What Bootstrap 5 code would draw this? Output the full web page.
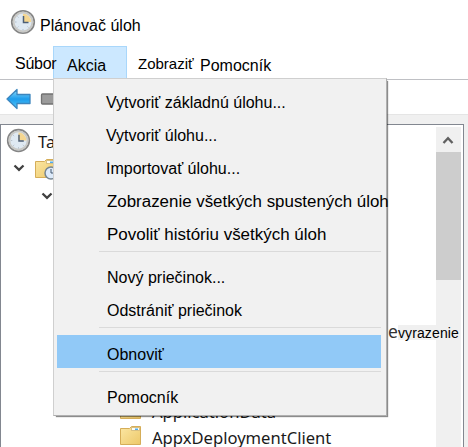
<!DOCTYPE html>
<html lang="sk">
<head>
<meta charset="utf-8">
<meta name="viewport" content="width=device-width, initial-scale=1">
<title>Plánovač úloh</title>
<link rel="stylesheet" href="https://cdn.jsdelivr.net/npm/bootstrap@5.3.0/dist/css/bootstrap.min.css">
<style>
html,body{height:100%;overflow:hidden}
body{font-family:"Liberation Sans",Arial,sans-serif;font-size:16px;color:#000;line-height:20px}
svg{display:block;flex:none}
.app-window{width:468px;height:447px;background:#fff}
.title-row{height:46px;padding:9px 0 0 10px}
.title-row span{padding-top:7px;margin-left:4px;letter-spacing:.02px}
.menu-row{height:33px;padding-left:15px}
.menu-row span{display:block}
.m-file{width:38px;padding-top:8px;letter-spacing:-.25px;z-index:1}
.m-action{width:74px;height:33px;background:#cce8ff;border:1px solid #a9d7fb;padding:9px 0 0 13px}
.m-view{width:73px;padding:8px 0 0 11px;font-size:15px}
.m-help{padding-top:10px}
.tool-row{height:36px;border-top:1px solid #bfc0c4;border-bottom:1px solid #e5e5e5;padding:8px 0 0 6px}
.work{height:332px;background:#f0f0f0;padding:9px 4px 0 0}
.tree{height:324px;background:#fff;border:1px solid #828790;border-width:1px 1px 0;padding-right:2px}
.tree-ui{font-family:"Noto Sans","Open Sans",sans-serif;font-size:16.6px;color:#1a1a1a;white-space:nowrap}
.tree-root{height:29px;padding-top:3px}
.tree-root span{margin-left:6px;padding-top:4px}
.tree-sub{padding:10px 0 0 24px}
.tree-leaves{padding:200px 0 0 119px}
.leaf{height:26px}
.leaf span{margin-left:10px;margin-top:2px}
.scroll-track{width:25px;margin-top:2px;background:#f0f0f0}
.scroll-track svg{height:25px}
.scroll-thumb{height:128px;background:#cdcdcd}
.action-menu{left:53px;top:78px;width:334px;height:338px;background:#f1f1f1;border:1px solid #b0b0b0;border-left-color:#cfcfcf;border-top-color:#cfcfcf;padding:7px 5px 0 3px;box-shadow:2px 2px 1px -1px rgba(0,0,0,.45)}
.menu-item{height:33px;padding:7px 0 0 50px;white-space:nowrap}
.menu-item.short{padding-left:49px}
.stretch{display:inline-block;transform:scaleX(1.056);transform-origin:0 50%}
.stretch.less{transform:scaleX(1.06)}
.menu-item.group-start{margin-top:9px}
.menu-item.chosen{background:#91c9f7;margin:7px 0 3px;padding-top:10px}
.menu-line{height:1px;background:#dadada;margin-left:42px}
.stray{right:9px;top:322px;height:20px}
.stray .tree-ui{font-size:17.5px;color:#333;margin-top:-1px}
.stray .lbl{font-size:14px;letter-spacing:.13px;line-height:17px;background:linear-gradient(90deg,#f0f0f0 0 38px,transparent 38px);height:15px;margin-top:3px}
</style>
<script src="https://cdn.jsdelivr.net/npm/bootstrap@5.3.0/dist/js/bootstrap.bundle.min.js"></script>
</head>
<body>
<svg width="0" height="0" class="position-absolute">
<defs>
<linearGradient id="blue" x2="0" y2="1"><stop stop-color="#8fdcfb"/><stop offset=".5" stop-color="#1d9ceb"/><stop offset="1" stop-color="#55c8fa"/></linearGradient>
<linearGradient id="gold" x2="1" y2="1"><stop stop-color="#fbe7a4"/><stop offset="1" stop-color="#edc869"/></linearGradient>
<symbol id="clock" viewBox="0 0 26 26"><circle cx="13" cy="13" r="11.2" fill="#dfe9f2" stroke="#858585" stroke-width="1.800"/><circle cx="13" cy="13" r="9.500" fill="none" stroke="#c9c9c6" stroke-width="2"/><path d="M13 13V4.800A8.200 8.200 0 0 1 21.200 13Z" fill="#f5d690"/><path d="M13.500 7V13.500H18.500" fill="none" stroke="#4d5f76" stroke-width="1.500"/><path d="M13 20v1.500M5 13h1.500M7.500 7.500l1 1M7.500 18.500l1-1M18.500 18.500l-1-1" stroke="#b5bec9"/></symbol>
<symbol id="folder" viewBox="0 0 22 20"><path d="M.5 2.500h9l2-2h9v18H.5Z" fill="url(#gold)" stroke="#d5ad58"/><path d="M11.500 1.500h8v3h-8Z" fill="#fffdf1" stroke="#c9ad6b" stroke-width=".7"/><path d="M15 2.500h3v1.500h-3Z" fill="#4baaf0"/></symbol>
<symbol id="chev" viewBox="0 0 12 8"><path d="M1.500 1.500 6 5.800l4.500-4.300" fill="none" stroke="#404040" stroke-width="2.300"/></symbol>
</defs>
</svg>
<main class="app-window position-relative overflow-hidden">
  <header class="title-row d-flex"><svg width="26" height="26"><use href="#clock"/></svg><span>Plánovač úloh</span></header>
  <nav class="menu-row d-flex"><span class="m-file">Súbor</span><span class="m-action">Akcia</span><span class="m-view">Zobraziť</span><span class="m-help">Pomocník</span></nav>
  <div class="tool-row d-flex">
    <svg width="25" height="22" viewBox="0 0 25 22"><path d="M1 11 11 1.500V6.500H24V15.500H11V20.500Z" fill="url(#blue)" stroke="#3c85bd" stroke-width="1.300" stroke-linejoin="round"/></svg>
    <svg class="ms-2" width="26" height="22" viewBox="0 0 26 22"><rect x="2.500" y="6" width="22" height="10" rx="1" fill="#9b9b9b" stroke="#727272" stroke-width="1.300"/></svg>
  </div>
  <section class="work">
    <div class="tree d-flex justify-content-between">
      <div class="tree-ui">
        <div class="tree-root d-flex"><svg class="ms-1" width="27" height="25"><use href="#clock"/></svg><span>Ta</span></div>
        <div class="d-flex ps-2 align-items-center"><svg class="ms-1" width="12" height="8"><use href="#chev"/></svg><svg class="ms-2 mt-1" width="30" height="24" viewBox="0 0 30 24"><use href="#folder" x="2" y="1" width="22" height="20"/><circle cx="18" cy="15" r="6" fill="#dceafa" stroke="#768591" stroke-width="1.500"/><path d="M18 11v4h3" fill="none" stroke="#42566c"/></svg></div>
        <div class="tree-sub"><svg class="ms-3" width="12" height="8"><use href="#chev"/></svg></div>
        <div class="tree-leaves"><div class="d-flex leaf"><svg width="22" height="20"><use href="#folder"/></svg><span>ApplicationData</span></div><div class="d-flex leaf"><svg width="22" height="20"><use href="#folder"/></svg><span>AppxDeploymentClient</span></div></div>
      </div>
      <div class="scroll-track"><svg width="24" viewBox="0 0 24 25"><path d="M7.500 16 12 11.200 16.500 16" fill="none" stroke="#606060" stroke-width="2.300"/></svg><div class="scroll-thumb"></div></div>
    </div>
  </section>
  <div class="action-menu position-absolute">
    <div class="menu-item short">Vytvoriť základnú úlohu...</div>
    <div class="menu-item short">Vytvoriť úlohu...</div>
    <div class="menu-item short">Importovať úlohu...</div>
    <div class="menu-item"><span class="stretch">Zobrazenie všetkých spustených úloh</span></div>
    <div class="menu-item"><span class="stretch less">Povoliť históriu všetkých úloh</span></div>
    <div class="menu-line"></div>
    <div class="menu-item group-start">Nový priečinok...</div>
    <div class="menu-item">Odstrániť priečinok</div>
    <div class="menu-line"></div>
    <div class="menu-item chosen">Obnoviť</div>
    <div class="menu-line"></div>
    <div class="menu-item group-start">Pomocník</div>
  </div>
  <div class="stray position-absolute d-flex"><span class="tree-ui">e</span><span class="lbl">vyrazenie</span></div>
</main>
</body>
</html>
